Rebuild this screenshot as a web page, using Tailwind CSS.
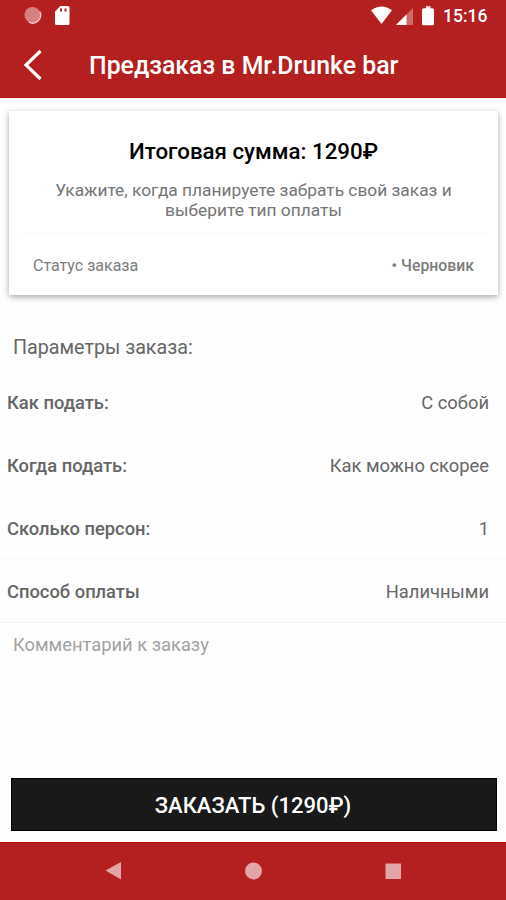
<!DOCTYPE html>
<html lang="ru">
<head>
<meta charset="utf-8">
<title>Предзаказ</title>
<script src="https://cdn.jsdelivr.net/npm/@tailwindcss/browser@4"></script>
</head>
<body class="bg-[#fefefe] font-['Roboto','Noto_Sans',sans-serif] text-[#666]">
<div class="flex h-[900px] w-[506px] flex-col overflow-hidden">
  <header class="h-[98px] shrink-0 border-b border-[#b40c0c] bg-[#b41f1f] text-white">
    <div class="flex h-8 items-center justify-between pl-6 pr-[18px]">
      <div class="flex items-center gap-[13px]">
        <svg class="h-[18px] w-[18px]" viewBox="0 0 18 18"><circle cx="8.500" cy="8" r="8" fill="#d88080"/><path d="M15.800 4.500A8 8 0 0 1 5 15.200" fill="none" stroke="#f6cccc" stroke-width="1.300"/></svg>
        <svg class="h-5 w-4" viewBox="0 0 16 20"><path fill="#fff" fill-rule="evenodd" d="M5.500 0H13q1.500 0 1.500 1.500v16q0 1.500-1.500 1.500H1.500Q0 19 0 17.500V5.500zM5 2.500v3h2v-3zM9.500 2.500v3h2v-3z"/></svg>
      </div>
      <div class="flex items-center">
        <svg class="h-5 w-[72px]" viewBox="0 0 72 20"><path d="M0 4.200Q10.500-3.400 21 4.200L10.500 18z" fill="#fff"/><path d="M42 2v17H25z" fill="#d06a6a"/><path d="M35.500 8.500V19H25z" fill="#fff"/><path d="M55 .2h4.500v2h2q1.500 0 1.500 1.500v14q0 1.500-1.500 1.500h-9q-1.500 0-1.500-1.500v-14q0-1.500 1.500-1.500H55z" fill="#fff"/></svg>
        <span class="w-[45px] whitespace-nowrap text-[17.500px] font-medium leading-8">15:16</span>
      </div>
    </div>
    <div class="flex h-[66px] items-center pl-6">
      <svg class="h-8 w-[65px]" viewBox="0 0 65 32"><path d="M16.500 2 2 16l14.500 14" fill="none" stroke="#fff" stroke-width="3.200"/></svg>
      <h1 class="whitespace-nowrap pt-0.5 text-[24.850px] font-medium leading-8">Предзаказ в Mr.Drunke bar</h1>
    </div>
  </header>

  <section class="ml-[9px] mr-2 mt-[13px] h-[184px] shrink-0 bg-white px-3 pt-6 shadow-[0_2px_6px_rgba(0,0,0,0.34)]">
    <h2 class="whitespace-nowrap text-center text-[22.300px] font-medium leading-8 text-black">Итоговая сумма: 1290₽</h2>
    <p class="mt-[13px] whitespace-nowrap text-center text-[17.350px] leading-5 text-[#757575]">Укажите, когда планируете забрать свой заказ и<br>выберите тип оплаты</p>
    <div class="mt-[13px] flex h-[63px] items-center justify-between border-t border-[#f7f7f7] px-3 pt-0.5 text-[16px] text-[#7c7c7c]">
      <span>Статус заказа</span><span class="text-[15.800px] font-medium">• Черновик</span>
    </div>
  </section>

  <h3 class="mt-[37px] h-8 shrink-0 pl-[13px] text-[19.700px] leading-8">Параметры заказа:</h3>
  <dl class="mt-[7px] shrink-0 text-[18.350px]">
    <div class="flex h-[63px] items-center justify-between border-b border-[#f9f9f9] pl-[7px] pr-[17px] pt-0.5"><dt class="font-medium">Как подать:</dt><dd>С собой</dd></div>
    <div class="flex h-[63px] items-center justify-between border-b border-[#fcfcfc] pl-[7px] pr-[17px] pt-0.5"><dt class="font-medium">Когда подать:</dt><dd>Как можно скорее</dd></div>
    <div class="flex h-[63px] items-center justify-between border-b border-[#f9f9f9] pl-[7px] pr-[17px] pt-0.5"><dt class="font-medium">Сколько персон:</dt><dd>1</dd></div>
    <div class="flex h-[63px] items-center justify-between border-b border-[#f4f4f4] pl-[7px] pr-[17px] pt-0.5"><dt class="font-medium">Способ оплаты</dt><dd>Наличными</dd></div>
  </dl>
  <div class="flex-1 pl-[13px] pt-1.5 text-[18.350px] leading-8 text-[#a3a3a3]">Комментарий к заказу</div>
  <button class="ml-[11px] mr-[9px] mb-[11px] h-[53px] shrink-0 border border-black bg-[#191919] pr-0.5 pt-0.5 text-[22px] font-medium text-white">ЗАКАЗАТЬ (1290₽)</button>
  <nav class="h-[58px] shrink-0 border-t border-[#b40c0c] bg-[#b41f1f]">
    <svg class="h-[57px] w-[506px]" viewBox="0 0 506 57" fill="#e3a5a5"><path d="M105.500 27.500 121 19v17.500z"/><circle cx="253.500" cy="28" r="8.500"/><path d="M385.500 20.500h15.500v15.500h-15.500z"/></svg>
  </nav>
</div>
</body>
</html>
